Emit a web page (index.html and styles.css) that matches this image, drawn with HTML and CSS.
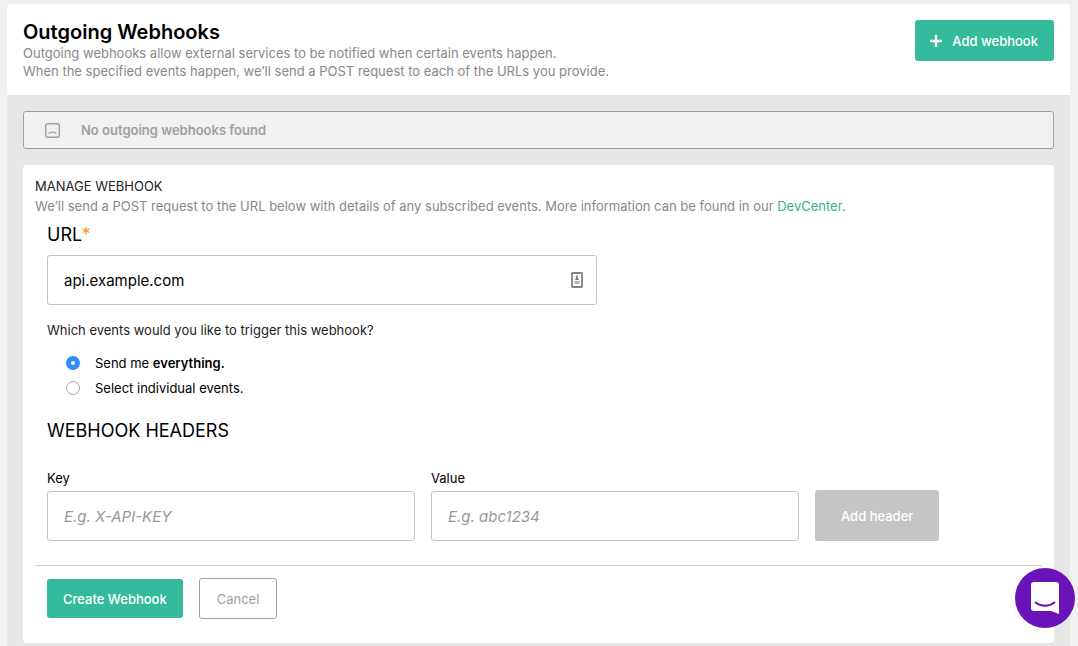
FILE: index.html
```html
<!DOCTYPE html>
<html lang="en">
<head>
<meta charset="utf-8">
<meta name="viewport" content="width=device-width, initial-scale=1">
<title>Outgoing Webhooks</title>
<link rel="stylesheet" href="styles.css">
</head>
<body>
<main class="panel">
  <header class="panel-header">
    <div>
      <h1 class="title">Outgoing Webhooks</h1>
      <p class="intro">Outgoing webhooks allow external services to be notified when certain events happen.<br>When the specified events happen, we’ll send a POST request to each of the URLs you provide.</p>
    </div>
    <button class="btn btn-add" type="button">
      <svg class="plus" viewBox="0 0 10 10" aria-hidden="true"><path d="M5 0v10M0 5h10" stroke="currentColor" stroke-width="2"/></svg>
      Add webhook
    </button>
  </header>
  <div class="panel-body">
    <div class="notice" role="status">
      <svg class="notice-icon" viewBox="0 0 15 15" fill="none" stroke="currentColor" aria-hidden="true"><rect x="0.700" y="0.700" width="13.600" height="13.600" rx="2" stroke-width="1.400"/><path d="M4 10.200C5.800 8.700 9.200 8.700 11 10.200" stroke-width="1.300" stroke-linecap="round"/></svg>
      <span>No outgoing webhooks found</span>
    </div>
    <form class="card">
      <h2 class="card-title">MANAGE WEBHOOK</h2>
      <p class="card-text">We’ll send a POST request to the URL below with details of any subscribed events. More information can be found in our <a class="link" href="#devcenter">DevCenter.</a></p>
      <div class="section">
        <label class="url-label" for="url">URL<span class="required">*</span></label>
        <div class="url-field">
          <input class="input url-input" id="url" type="text" value="api.example.com">
          <svg class="autofill" viewBox="0 0 12 16" aria-hidden="true"><rect x="1" y="1" width="10" height="14" rx="0.5" fill="#fff" stroke="#858585" stroke-width="1.8"/><path d="M5.2 3.4h1.6v2L8 8H4l1.2-2.6z" fill="#777"/><path d="M3.5 9h5v3h-5z" fill="#b5b5b5"/></svg>
        </div>
        <fieldset class="events">
          <legend class="question">Which events would you like to trigger this webhook?</legend>
          <label class="option"><input class="radio" type="radio" name="events" checked><span>Send me <strong>everything.</strong></span></label>
          <label class="option"><input class="radio" type="radio" name="events"><span>Select individual events.</span></label>
        </fieldset>
        <h3 class="headers-title">WEBHOOK HEADERS</h3>
        <div class="header-row">
          <div class="field">
            <label class="label" for="key">Key</label>
            <input class="input" id="key" type="text" placeholder="E.g. X-API-KEY">
          </div>
          <div class="field">
            <label class="label" for="value">Value</label>
            <input class="input" id="value" type="text" placeholder="E.g. abc1234">
          </div>
          <button class="btn btn-header" type="button">Add header</button>
        </div>
      </div>
      <div class="actions">
        <button class="btn btn-create" type="submit">Create Webhook</button>
        <button class="btn btn-cancel" type="button">Cancel</button>
      </div>
    </form>
  </div>
</main>
<button class="chat" type="button" aria-label="Open chat">
  <svg class="chat-icon" viewBox="0 0 28 32" aria-hidden="true"><path d="M3 0h22a3 3 0 0 1 3 3v29l-8-3H3a3 3 0 0 1-3-3V3a3 3 0 0 1 3-3z" fill="#fff"/><path d="M4.500 20.500c5.500 4.300 13.500 4.300 19 0" fill="none" stroke="#6a13b8" stroke-width="2" stroke-linecap="round"/></svg>
</button>
</body>
</html>
```
FILE: styles.css
```css
* { box-sizing: border-box; }

body {
  margin: 0;
  padding: 4px 8px 0 7px;
  min-height: 100vh;
  display: flex;
  background: #f1f1f1;
  color: #000;
  font: 13px/20px Inter, "Open Sans", sans-serif;
}

h1, h2, h3, p, fieldset { margin: 0; padding: 0; border: 0; }

.panel {
  flex: 1;
  min-width: 0;
  display: flex;
  flex-direction: column;
  border-radius: 4px 4px 0 0;
  background: #e7e7e7;
}

.panel-header {
  display: flex;
  justify-content: space-between;
  align-items: flex-start;
  gap: 16px;
  padding: 16px 16px 15px;
  border-radius: 4px 4px 0 0;
  background: #fff;
}

.title { font-size: 20px; line-height: 24px; font-weight: 600; }
.intro { line-height: 18px; color: #888; }

.btn {
  flex: none;
  border: 0;
  border-radius: 3px;
  color: #fff;
  font: 500 13px/20px Inter, "Open Sans", sans-serif;
  cursor: pointer;
}

.btn-add {
  display: flex;
  align-items: center;
  gap: 10px;
  height: 41px;
  padding: 0 16px 0 15px;
  background: #35bb9b;
}
.plus { width: 12px; height: 12px; }

.panel-body { padding: 16px 16px 3px; }

.notice {
  display: flex;
  align-items: center;
  gap: 21px;
  height: 38px;
  padding: 0 21px;
  border: 1px solid #a0a0a0;
  border-radius: 3px;
  background: #f1f1f1;
  color: #a0a0a0;
  font-weight: 600;
}
.notice-icon { width: 15px; height: 15px; }

.card {
  margin-top: 16px;
  padding: 11px 12px 24px;
  border-radius: 4px;
  background: #fff;
}
.card-title { color: #222; font-size: 13px; font-weight: 400; }
.card-text { color: #888; }
.link { color: #35b092; text-decoration: none; }

.section { padding: 9px 12px 24px; }
.url-label { display: block; font-size: 18px; }
.required { color: #ff9a1f; }

.input {
  display: block;
  width: 100%;
  height: 50px;
  padding: 0 16px;
  border: 1px solid #c4c4c4;
  border-radius: 3px;
  background: #fff;
  color: #000;
  font: 15px/20px Inter, "Open Sans", sans-serif;
}
.input::placeholder { color: #999; font-style: italic; opacity: 1; }

.url-field {
  position: relative;
  max-width: 550px;
  margin: 10px 0 15px;
}
.url-input { padding-right: 40px; }
.autofill {
  position: absolute;
  top: 17px;
  right: 14px;
  width: 12px;
  height: 16px;
}

.question { padding: 0 0 10px; color: #222; }
.option {
  display: flex;
  align-items: center;
  gap: 15px;
  height: 25px;
  padding-left: 19px;
}
.option strong { font-weight: 600; }
.radio {
  appearance: none;
  width: 14px;
  height: 14px;
  margin: 0;
  border: 1px solid #a6a6a6;
  border-radius: 50%;
  background: #fff;
}
.radio:checked { border: 5px solid #2f8cff; }

.headers-title { margin: 21px 0 27px; font-size: 18px; font-weight: 400; }
.header-row { display: flex; align-items: flex-end; gap: 16px; }
.field { flex: 1; max-width: 368px; }
.label { display: block; margin-bottom: 3px; }
.btn-header { height: 51px; padding: 0 26px; background: #c5c5c5; }

.actions {
  display: flex;
  align-items: center;
  gap: 16px;
  padding: 12px 12px 0;
  border-top: 1px solid #cfcfcf;
}
.btn-create { height: 39px; padding: 0 16px; background: #35bb9b; }
.btn-cancel {
  height: 41px;
  padding: 0 17px;
  border: 1px solid #a0a0a0;
  background: #fff;
  color: #a0a0a0;
  font-weight: 400;
}

.chat {
  position: fixed;
  right: 3px;
  bottom: 18px;
  display: flex;
  align-items: center;
  justify-content: center;
  width: 60px;
  height: 60px;
  padding: 0;
  border: 0;
  border-radius: 50%;
  background: #6a13b8;
  cursor: pointer;
}
.chat-icon { width: 28px; height: 32px; }
```
